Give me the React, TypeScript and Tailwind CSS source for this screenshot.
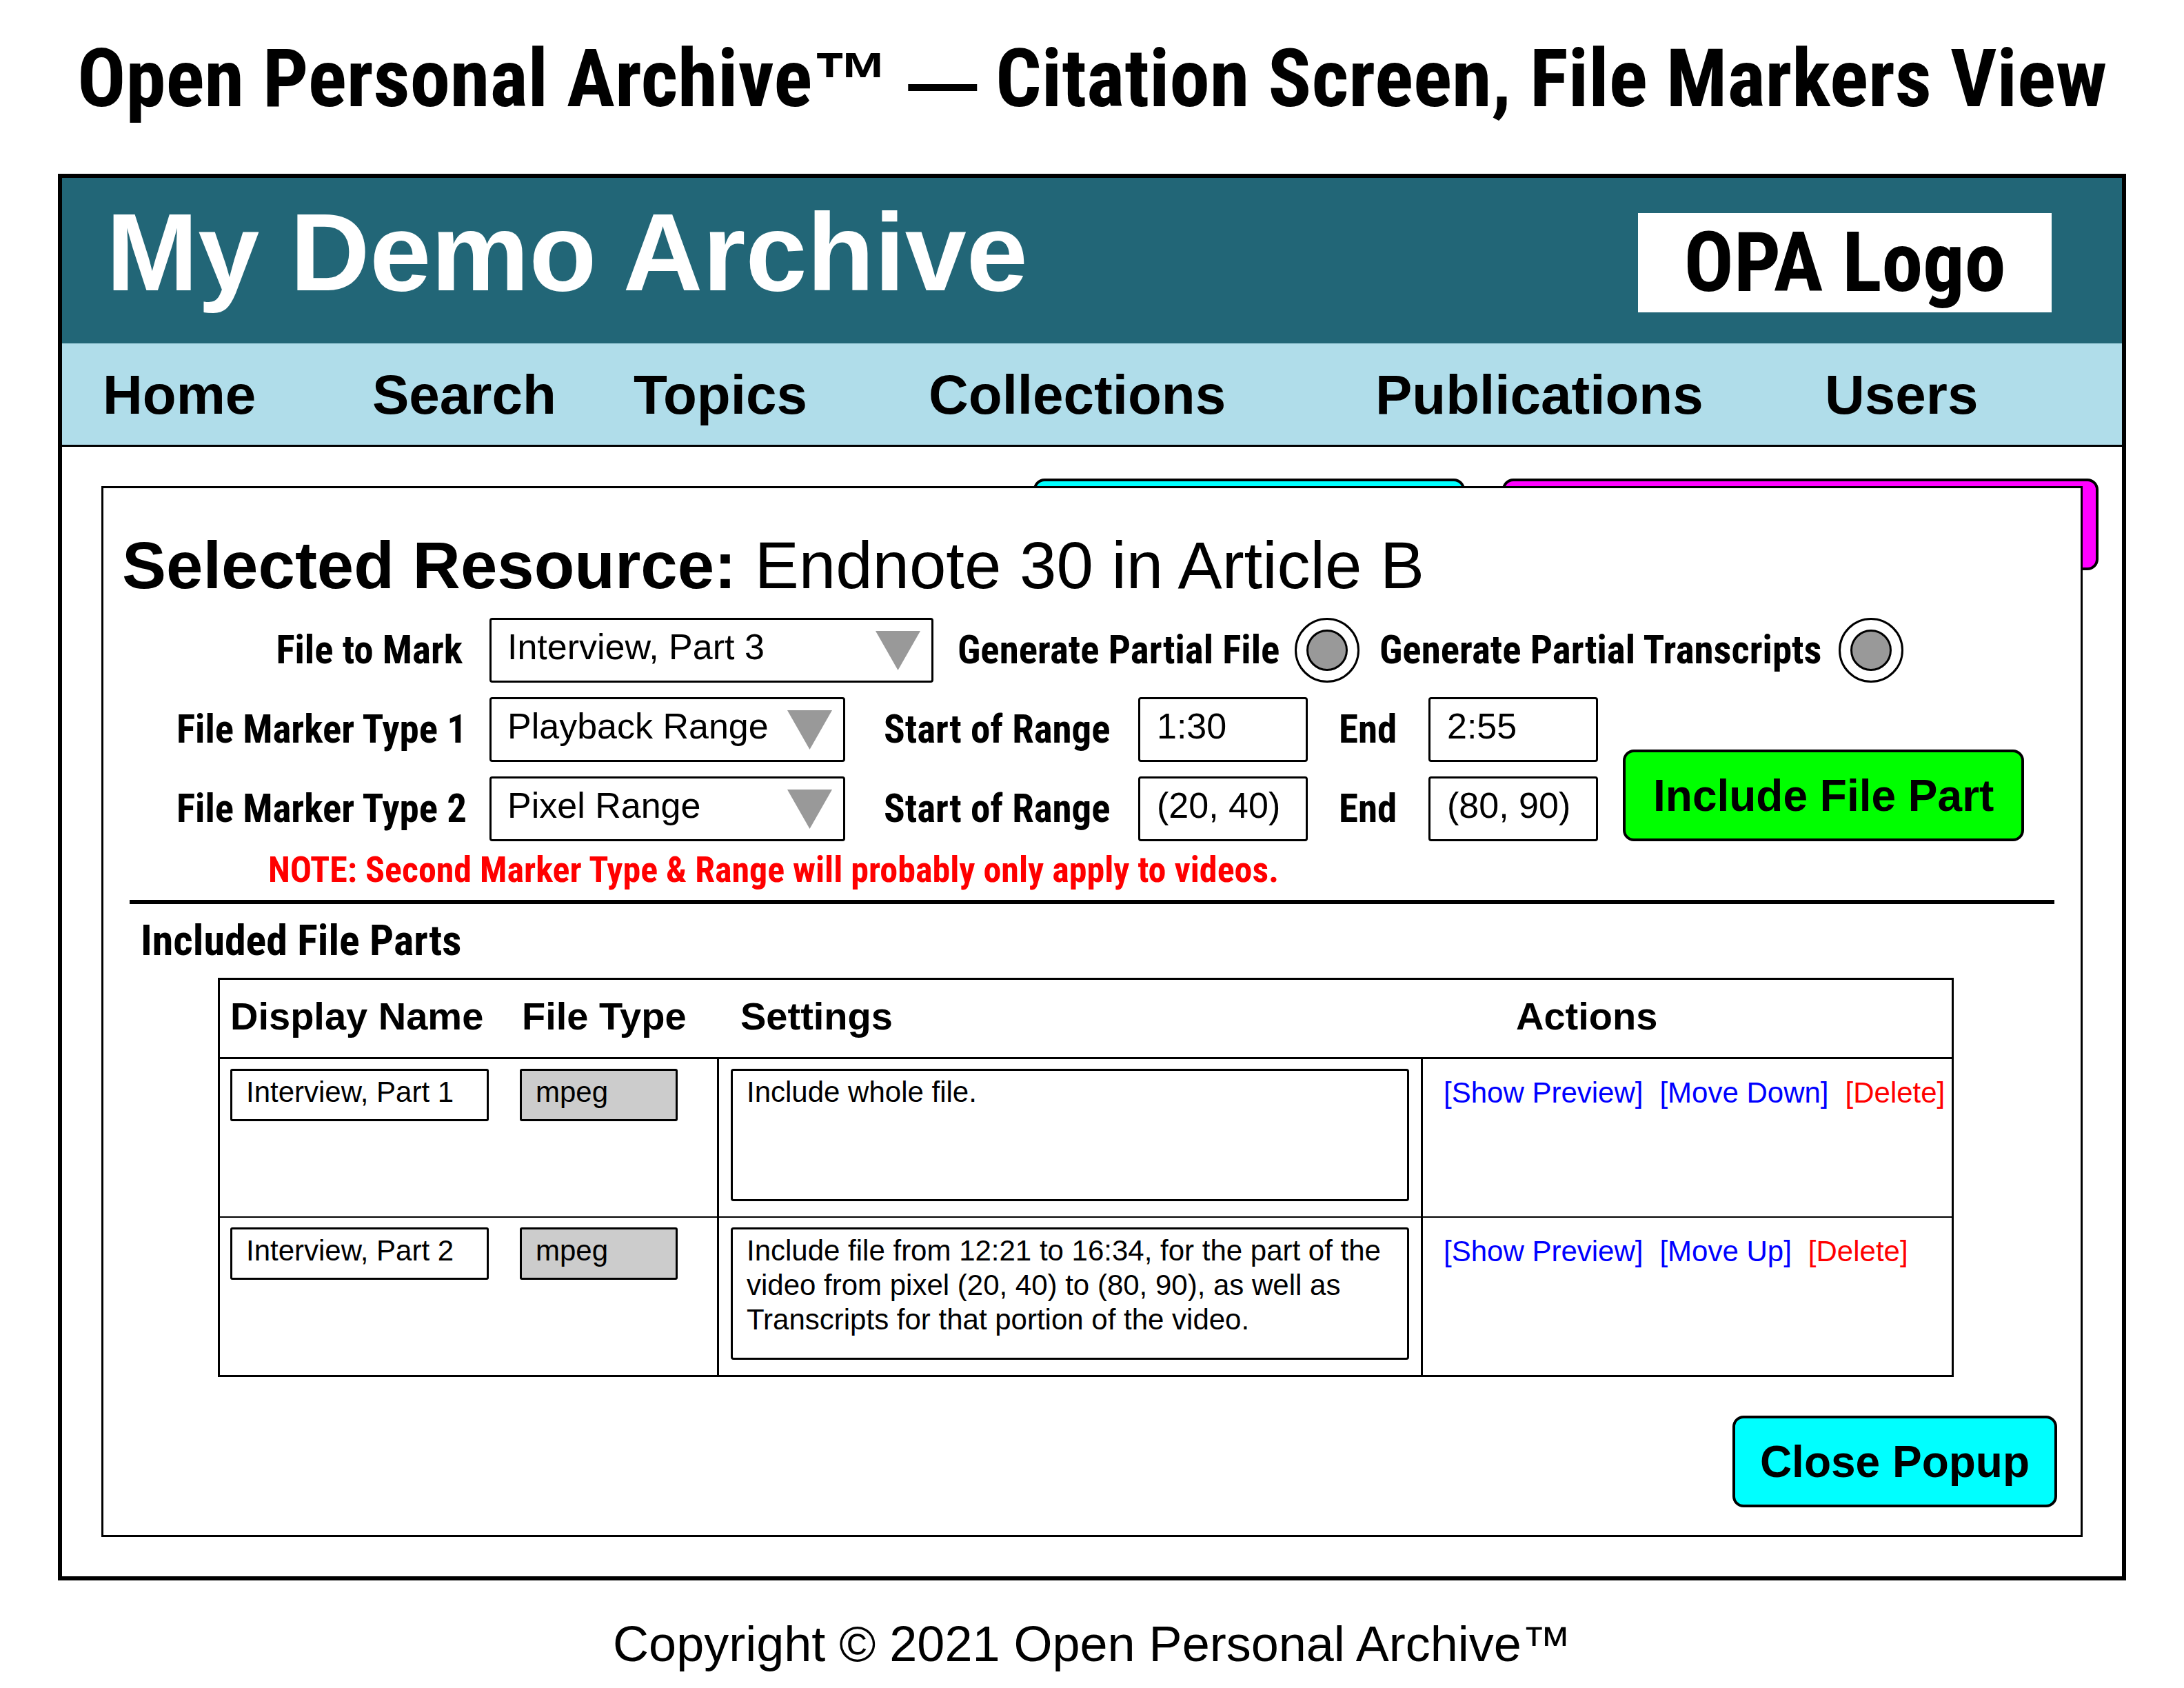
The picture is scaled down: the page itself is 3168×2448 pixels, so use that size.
import React from "react";

const NARROW = "font-['Roboto_Condensed','Arial_Narrow',sans-serif] font-bold";

const navItems = ["Home", "Search", "Topics", "Collections", "Publications", "Users"];

type Part = { id: string; name: string; type: string; settings: string; move: string };

const parts: Part[] = [
  { id: "part-1", name: "Interview, Part 1", type: "mpeg", settings: "Include whole file.", move: "[Move Down]" },
  {
    id: "part-2",
    name: "Interview, Part 2",
    type: "mpeg",
    settings:
      "Include file from 12:21 to 16:34, for the part of the video from pixel (20, 40) to (80, 90), as well as Transcripts for that portion of the video.",
    move: "[Move Up]",
  },
];

function Label({ htmlFor, className = "", children }: { htmlFor: string; className?: string; children: React.ReactNode }) {
  return (
    <label htmlFor={htmlFor} className={`${NARROW} shrink-0 whitespace-nowrap text-[57px] leading-[62px] ${className}`}>
      {children}
    </label>
  );
}

function SelectBox({ id, value, options, className }: { id: string; value: string; options: string[]; className: string }) {
  return (
    <div className={`relative shrink-0 ${className}`}>
      <select
        id={id}
        defaultValue={value}
        className="block h-[94px] w-full appearance-none rounded-[4px] border-[3px] border-black bg-white pb-[10px] pl-[23px] pr-[90px] text-[52px] leading-[60px]"
      >
        {options.map((o) => (
          <option key={o}>{o}</option>
        ))}
      </select>
      <svg viewBox="0 0 65 57" className="pointer-events-none absolute right-[19px] top-[19px] h-[57px] w-[65px]" aria-hidden="true">
        <path d="M0 0H65L32.5 57Z" fill="#999999" />
      </svg>
    </div>
  );
}

function RangeInput({ id, value }: { id: string; value: string }) {
  return (
    <input
      id={id}
      type="text"
      defaultValue={value}
      className="h-[94px] w-[246px] shrink-0 rounded-[4px] border-[3px] border-black bg-white pb-[10px] pl-[24px] text-[52px] leading-[60px]"
    />
  );
}

function Radio({ id }: { id: string }) {
  return (
    <input
      id={id}
      type="radio"
      name={id}
      defaultChecked
      className="grid size-[94px] shrink-0 appearance-none place-content-center rounded-full border-[3px] border-black bg-white before:size-[60px] before:rounded-full before:border-[3px] before:border-black before:bg-[#999999] before:content-['']"
    />
  );
}

function MarkerRow({ n, type, start, end }: { n: number; type: string; start: string; end: string }) {
  return (
    <div className="flex items-center">
      <Label htmlFor={`marker-${n}`} className="w-[527px] text-right">
        File Marker Type {n}
      </Label>
      <SelectBox id={`marker-${n}`} value={type} options={["Playback Range", "Pixel Range"]} className="ml-[33px] w-[516px]" />
      <Label htmlFor={`start-${n}`} className="ml-[56px] w-[369px]">
        Start of Range
      </Label>
      <RangeInput id={`start-${n}`} value={start} />
      <Label htmlFor={`end-${n}`} className="ml-[45px] w-[130px]">
        End
      </Label>
      <RangeInput id={`end-${n}`} value={end} />
    </div>
  );
}

const actionButton =
  "h-[133px] rounded-[16px] border-4 border-black text-[64px] font-bold leading-[64px] whitespace-nowrap";
const smallField = "block h-[76px] w-full rounded-[3px] border-[3px] border-black pb-2 pl-5 text-[42px] leading-[50px]";

function PartsTable() {
  return (
    <table className="ml-[166px] mr-[184px] mt-[22px] border-separate border-spacing-0 border-[3px] border-black">
      <colgroup>
        <col className="w-[413px]" />
        <col className="w-[308px]" />
        <col />
        <col className="w-[767px]" />
      </colgroup>
      <thead>
        <tr className="text-left text-[56px] leading-[56px]">
          <th className="whitespace-nowrap border-b-[3px] border-black pb-[31px] pl-[15px] pt-[25px]">Display Name</th>
          <th className="whitespace-nowrap border-b-[3px] border-black pb-[31px] pl-[25px] pt-[25px]">File Type</th>
          <th className="border-b-[3px] border-black pb-[31px] pl-[34px] pt-[25px]">Settings</th>
          <th className="border-b-[3px] border-black pb-[31px] pl-[135px] pt-[25px]">Actions</th>
        </tr>
      </thead>
      <tbody className="[&>tr:first-child>td]:border-b-2">
        {parts.map((p) => (
          <tr key={p.id} className="align-top text-[42px] leading-[50px]">
            <td className="border-black pl-[15px] pr-[23px] pt-[14px]">
              <input aria-label="Display Name" defaultValue={p.name} className={`${smallField} bg-white`} />
            </td>
            <td className="border-black pl-[22px] pr-[57px] pt-[14px]">
              <input aria-label="File Type" readOnly defaultValue={p.type} className={`${smallField} bg-[#cccccc]`} />
            </td>
            <td className="border-x-[3px] border-black px-[17px] pb-[22px] pt-[14px]">
              <textarea
                aria-label="Settings"
                defaultValue={p.settings}
                className="block h-[192px] w-full resize-none overflow-hidden rounded-[4px] border-[3px] border-black bg-white pl-5 pr-2 pt-[6px]"
              />
            </td>
            <td className="border-black pl-[30px] pt-[24px]">
              <div className="flex gap-[24px] whitespace-nowrap text-[#0000ff]">
                <a href="#preview">[Show Preview]</a>
                <a href="#move">{p.move}</a>
                <a href="#delete" className="text-[#ff0000]">
                  [Delete]
                </a>
              </div>
            </td>
          </tr>
        ))}
      </tbody>
    </table>
  );
}

export default function App() {
  return (
    <div className="bg-white px-[84px] pb-[20px] pt-[54px] font-['Liberation_Sans',Arial,sans-serif] text-black">
      <h1 className={`${NARROW} whitespace-nowrap text-center text-[117px] leading-[120px]`}>
        Open Personal Archive
        <span className="font-['Liberation_Sans'] text-[112px] leading-none">™</span>{" "}
        <span className="font-['Liberation_Sans'] text-[100px] leading-none">—</span> Citation Screen, File Markers View
      </h1>

      <div className="mt-[78px] border-[6px] border-black">
        <header className="flex items-start justify-between bg-[#226677] pb-[45px] pl-[64px] pr-[102px]">
          <h2 className="mt-[28px] text-[160px] font-bold leading-[160px] text-white">My Demo Archive</h2>
          <div className={`${NARROW} mt-[51px] flex h-[144px] w-[600px] items-center justify-center bg-white text-[120px] leading-[120px]`}>
            OPA Logo
          </div>
        </header>

        <nav className="grid grid-cols-[391fr_379fr_428fr_648fr_652fr_431fr] border-b-[3px] border-black bg-[#b0ddea] pb-8 pl-[59px] pt-[35px] text-[80px] font-bold leading-[80px]">
          {navItems.map((item) => (
            <a key={item} href={`#${item.toLowerCase()}`}>
              {item}
            </a>
          ))}
        </nav>

        <main className="relative p-[57px]">
          <div className="absolute right-[34px] top-[46px] flex gap-[54px]">
            <button type="button" aria-label="Page action" className={`${actionButton} w-[626px] bg-[#00ffff]`} />
            <button type="button" aria-label="Citation action" className={`${actionButton} w-[865px] bg-[#ff00ff]`} />
          </div>

          <section className="relative border-[3px] border-black bg-white pb-[40px] pt-[64px]">
            <h3 className="pl-[27px] text-[96px] leading-[96px]">
              <b>Selected Resource:</b> Endnote 30 in Article B
            </h3>

            <form className="mt-[28px]">
              <div className="flex items-center">
                <Label htmlFor="file" className="w-[527px] pr-[6px] text-right">
                  File to Mark
                </Label>
                <SelectBox
                  id="file"
                  value="Interview, Part 3"
                  options={["Interview, Part 1", "Interview, Part 2", "Interview, Part 3"]}
                  className="ml-[33px] w-[644px]"
                />
                <Label htmlFor="partial-file" className="ml-[35px] w-[489px]">
                  Generate Partial File
                </Label>
                <Radio id="partial-file" />
                <Label htmlFor="partial-transcripts" className="ml-[29px] w-[666px]">
                  Generate Partial Transcripts
                </Label>
                <Radio id="partial-transcripts" />
              </div>

              <div className="mt-[21px] flex items-end gap-[36px]">
                <div className="flex flex-col gap-[21px]">
                  <MarkerRow n={1} type="Playback Range" start="1:30" end="2:55" />
                  <MarkerRow n={2} type="Pixel Range" start="(20, 40)" end="(80, 90)" />
                </div>
                <button type="button" className={`${actionButton} bg-[#00ff00] px-[40px]`}>
                  Include File Part
                </button>
              </div>
            </form>

            <p className={`${NARROW} mt-4 pl-[239px] text-[52px] leading-[52px] text-[#ff0000]`}>
              NOTE: Second Marker Type &amp; Range will probably only apply to videos.
            </p>

            <hr className="ml-[38px] mr-[38px] mt-[17px] border-t-[6px] border-black" />

            <h4 className={`${NARROW} mt-[21px] pl-[54px] text-[62px] leading-[64px]`}>Included File Parts</h4>

            <div className="flex flex-col">
              <PartsTable />
            </div>

            <div className="mt-[56px] flex justify-end pr-[34px]">
              <button type="button" className={`${actionButton} bg-[#00ffff] px-9`}>
                Close Popup
              </button>
            </div>
          </section>
        </main>
      </div>

      <footer className="mt-[56px] text-center text-[72px] leading-[72px]">Copyright © 2021 Open Personal Archive™</footer>
    </div>
  );
}
